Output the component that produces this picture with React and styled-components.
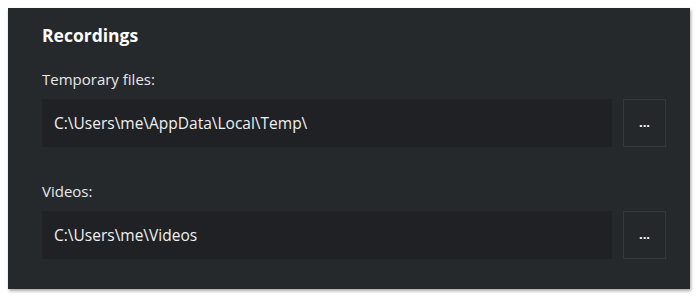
import React from 'react'
import styled, { createGlobalStyle } from 'styled-components'

const Global = createGlobalStyle`
body {
  margin: 0;
  background: #ffffff;
  font-family: "Open Sans", "Noto Sans", sans-serif;
}
`

const Page = styled.div`
  width: 700px;
  height: 298px;
  padding: 8px 10px 9px 8px;
  box-sizing: border-box;
`

const Panel = styled.section`
  height: 100%;
  background: #26292c;
  box-shadow: 1px 2px 3px rgba(0, 0, 0, 0.35);
  padding: 15px 24px 0 34px;
  box-sizing: border-box;
  color: #e6e6e6;
`

const Title = styled.h2`
  margin: 0;
  font-size: 17.5px;
  font-weight: 700;
  line-height: 24px;
  color: #ffffff;
`

const Field = styled.div`
  margin-top: ${p => p.first ? '22px' : '34px'};
`

const Label = styled.div`
  font-size: 15px;
  line-height: 20px;
  color: #e8e8e8;
`

const Row = styled.div`
  display: flex;
  gap: 11px;
  margin-top: 10px;
`

const PathBox = styled.div`
  flex: 1;
  height: 48px;
  display: flex;
  align-items: center;
  padding-left: 12px;
  background: #1f2124;
  font-size: 15.5px;
  color: #f0f0f0;
`

const Browse = styled.button`
  width: 43px;
  height: 48px;
  background: #25282b;
  border: 1px solid #35383c;
  color: #ffffff;
  font-family: inherit;
  font-size: 13px;
  font-weight: 700;
  padding: 0 0 2px;
  cursor: pointer;
`

const fields = [
  { label: 'Temporary files:', path: 'C:\\Users\\me\\AppData\\Local\\Temp\\' },
  { label: 'Videos:', path: 'C:\\Users\\me\\Videos' },
]

export default function App() {
  return (
    <Page>
      <Global />
      <Panel>
        <Title>Recordings</Title>
        {fields.map((f, i) => (
          <Field key={f.label} first={i === 0}>
            <Label>{f.label}</Label>
            <Row>
              <PathBox>{f.path}</PathBox>
              <Browse>...</Browse>
            </Row>
          </Field>
        ))}
      </Panel>
    </Page>
  )
}
